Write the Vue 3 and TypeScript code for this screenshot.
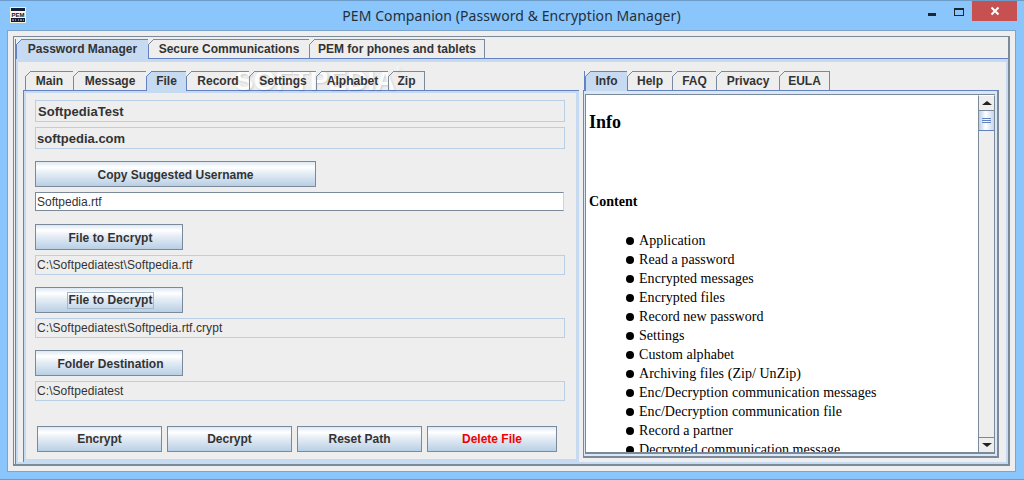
<script setup lang="ts">
interface Tab { label: string; w: number; on?: boolean }
const mainTabs: Tab[] = [
  { label: 'Password Manager', w: 133, on: true },
  { label: 'Secure Communications', w: 161 },
  { label: 'PEM for phones and tablets', w: 175 },
]
const leftTabs: Tab[] = [
  { label: 'Main', w: 49 },
  { label: 'Message', w: 73 },
  { label: 'File', w: 40, on: true },
  { label: 'Record', w: 63 },
  { label: 'Settings', w: 67 },
  { label: 'Alphabet', w: 72 },
  { label: 'Zip', w: 36 },
]
const rightTabs: Tab[] = [
  { label: 'Info', w: 43, on: true },
  { label: 'Help', w: 45 },
  { label: 'FAQ', w: 44 },
  { label: 'Privacy', w: 63 },
  { label: 'EULA', w: 50 },
]
const contents: string[] = [
  'Application',
  'Read a password',
  'Encrypted messages',
  'Encrypted files',
  'Record new password',
  'Settings',
  'Custom alphabet',
  'Archiving files (Zip/ UnZip)',
  'Enc/Decryption communication messages',
  'Enc/Decryption communication file',
  'Record a partner',
  'Decrypted communication message',
]
const actions = [
  { label: 'Encrypt', w: 125 },
  { label: 'Decrypt', w: 125 },
  { label: 'Reset Path', w: 125 },
  { label: 'Delete File', w: 130, danger: true },
]
</script>

<template>
  <div class="window">
    <header class="titlebar">
      <svg class="appicon" width="16" height="16" viewBox="0 0 16 16">
        <rect x="0" y="0" width="16" height="16" fill="#f4f0d8" />
        <rect x="1" y="1" width="14" height="3" fill="#141c38" />
        <rect x="1" y="4" width="14" height="7" fill="#f8f8f0" />
        <text x="8" y="10" text-anchor="middle" class="icontext">PEM</text>
        <rect x="1" y="11" width="14" height="4" fill="#141c38" />
        <path d="M2 13h2M5 13h1M8 13h1M10 13h2M13 13h1" stroke="#d8d8d8" stroke-width="1" />
      </svg>
      <div class="title">PEM Companion (Password &amp; Encryption Manager)</div>
      <div class="controls">
        <span class="minimize"></span>
        <span class="maximize"></span>
        <span class="close">
          <svg width="10" height="10" viewBox="0 0 10 10">
            <path d="M1.5 1.5l7 7M8.5 1.5l-7 7" stroke="#fff" stroke-width="2" />
          </svg>
        </span>
      </div>
    </header>

    <div class="client">
      <div class="tabbed">
        <div class="strip strip-main">
          <div
            v-for="t in mainTabs"
            :key="t.label"
            class="tab"
            :class="{ on: t.on }"
            :style="{ width: t.w + 'px' }"
          >{{ t.label }}</div>
        </div>
        <div class="mainbody">
          <div class="mainband">
            <section class="leftcol">
              <div class="strip strip-sub">
                <div class="watermark">SOFTPEDIA<sup>®</sup></div>
                <div
                  v-for="t in leftTabs"
                  :key="t.label"
                  class="tab"
                  :class="{ on: t.on }"
                  :style="{ width: t.w + 'px' }"
                >{{ t.label }}</div>
              </div>
              <div class="leftpanel">
                <div class="leftband">
                  <div class="field strong first">SoftpediaTest</div>
                  <div class="field strong second">softpedia.com</div>
                  <button class="btn wide">Copy Suggested Username</button>
                  <div class="input">Softpedia.rtf</div>
                  <button class="btn short gap-a">File to Encrypt</button>
                  <div class="field path">C:\Softpediatest\Softpedia.rtf</div>
                  <button class="btn short gap-b"><span class="focus">File to Decrypt</span></button>
                  <div class="field path">C:\Softpediatest\Softpedia.rtf.crypt</div>
                  <button class="btn short gap-b">Folder Destination</button>
                  <div class="field path">C:\Softpediatest</div>
                  <div class="actions">
                    <button
                      v-for="a in actions"
                      :key="a.label"
                      class="btn action"
                      :class="{ danger: a.danger }"
                      :style="{ width: a.w + 'px' }"
                    >{{ a.label }}</button>
                  </div>
                </div>
              </div>
            </section>

            <section class="rightcol">
              <div class="strip strip-sub strip-right">
                <div
                  v-for="t in rightTabs"
                  :key="t.label"
                  class="tab"
                  :class="{ on: t.on }"
                  :style="{ width: t.w + 'px' }"
                >{{ t.label }}</div>
              </div>
              <div class="rightpanel">
                <div class="rightband">
                  <div class="scrollframe">
                    <article class="doc">
                      <h1>Info</h1>
                      <h2>Content</h2>
                      <ul>
                        <li v-for="c in contents" :key="c"><i class="dot"></i>{{ c }}</li>
                      </ul>
                    </article>
                    <div class="scrollbar">
                      <div class="sbtn up"><span class="arrow-up"></span></div>
                      <div class="thumb"><span></span><span></span><span></span></div>
                      <div class="track"></div>
                      <div class="sbtn down"><span class="arrow-down"></span></div>
                    </div>
                  </div>
                </div>
              </div>
            </section>
          </div>
        </div>
      </div>
    </div>
  </div>
</template>

<style>
html, body { margin: 0; padding: 0; overflow: hidden; }
</style>

<style scoped>
* { box-sizing: border-box; }
.window {
  position: relative;
  width: 1024px;
  height: 480px;
  display: flex;
  flex-direction: column;
  background: #8ac6fb;
  border-top: 1px solid #6d9cc9;
  border-bottom: 1px solid #6d9cc9;
  font-family: "Liberation Sans", Arial, sans-serif;
  overflow: hidden;
}
.titlebar {
  height: 29px;
  flex: none;
  display: flex;
  align-items: flex-start;
  position: relative;
}
.appicon { position: absolute; left: 10px; top: 6px; }
.icontext { font: bold 6px "Liberation Sans", sans-serif; fill: #111; letter-spacing: 0; }
.title {
  width: 100%;
  text-align: center;
  font: 14px/30px "Noto Sans", sans-serif;
  letter-spacing: 0.07px;
  color: #23303c;
  padding-right: 1px;
}
.controls {
  position: absolute;
  right: 7px;
  top: 0;
  display: flex;
  align-items: flex-start;
}
.minimize { width: 8px; height: 3px; background: #1c2630; margin: 12px 18px 0 0; }
.maximize { width: 10px; height: 8px; border: 1px solid #1c2630; border-top-width: 2px; margin: 7px 8px 0 0; }
.close {
  width: 45px;
  height: 20px;
  background: #c75050;
  display: flex;
  align-items: center;
  justify-content: center;
}
.client {
  flex: 1;
  margin: 0 8px 7px 7px;
  border: 1px solid #7fa3c9;
  background: #eeeeee;
  padding: 5px;
  display: flex;
  min-height: 0;
}
.tabbed {
  flex: 1;
  border-style: solid;
  border-color: #7a8a9a;
  border-width: 1px 2px 2px 1px;
  padding: 2px 0 0 1px;
  display: flex;
  flex-direction: column;
  min-width: 0;
}
.strip {
  display: flex;
  height: 19px;
  flex: none;
  align-items: flex-start;
  position: relative;
  z-index: 2;
}
.strip-main { margin-left: 1px; }
.strip-sub { margin-left: 2px; }
.tab {
  position: relative;
  z-index: 1;
  height: 19px;
  border-top: 1px solid #7a8a9a;
  border-right: 1px solid #7a8a9a;
  font-size: 12px;
  font-weight: 700;
  line-height: 18px;
  text-align: center;
  color: #333;
  white-space: nowrap;
}
.watermark + .tab,
.tab:first-child { border-left: 1px solid #7a8a9a; }
.tab::before {
  content: "";
  position: absolute;
  left: -1px;
  top: -1px;
  width: 6px;
  height: 6px;
  background: linear-gradient(135deg, #eeeeee 0 42%, #7a8a9a 42% 58%, transparent 58%);
}
.tab.on {
  height: 20px;
  background: #c6daf1;
  border-color: #6382bf;
  box-shadow: -1px 0 0 #6382bf;
}
.tab.on::before {
  background: linear-gradient(135deg, #eeeeee 0 42%, #6382bf 42% 58%, transparent 58%);
}
.watermark {
  position: absolute;
  left: 210px;
  top: -4px;
  font: 700 28px/28px "Liberation Sans", sans-serif;
  color: rgba(255, 255, 255, 0.95);
  text-shadow: 1px 1px 2px rgba(0, 0, 0, 0.14);
  white-space: nowrap;
  pointer-events: none;
}
.watermark sup { font-size: 8px; vertical-align: 18px; line-height: 0; }
.mainbody {
  flex: 1;
  min-height: 0;
  border-top: 1px solid #6382bf;
  border-left: 1px solid #6382bf;
  display: flex;
}
.mainband {
  flex: 1;
  min-width: 0;
  border-style: solid;
  border-color: #c6daf1;
  border-width: 3px 2px 2px 2px;
  padding: 9px 7px 0 5px;
  display: flex;
  gap: 4px;
}
.leftcol { width: 556px; display: flex; flex-direction: column; flex: none; }
.rightcol { flex: 1; display: flex; flex-direction: column; min-width: 0; padding-bottom: 4px; }
.leftpanel {
  flex: 1;
  min-height: 0;
  border-top: 1px solid #6382bf;
  border-left: 1px solid #6382bf;
  display: flex;
}
.leftband {
  flex: 1;
  min-width: 0;
  border-style: solid;
  border-color: #c6daf1;
  border-width: 2px 3px 3px 2px;
  padding: 7px 0 0 9px;
  display: flex;
  flex-direction: column;
  align-items: flex-start;
}
.field {
  width: 530px;
  flex: none;
  border: 1px solid #b8cfe5;
  color: #333;
  white-space: nowrap;
}
.strong { height: 22px; font-size: 13px; font-weight: 700; line-height: 21px; padding-left: 1px; }
.first { padding-left: 2px; letter-spacing: 0.05px; }
.second { margin-top: 5px; margin-bottom: 12px; }
.path { height: 20px; margin-top: 5px; font-size: 12px; line-height: 19px; padding-left: 1px; letter-spacing: 0.07px; }
.input {
  width: 529px;
  height: 19px;
  flex: none;
  margin-top: 5px;
  background: #fff;
  border-top: 1px solid #7a8a9a;
  border-left: 1px solid #7a8a9a;
  border-bottom: 1px solid #7a8a9a;
  border-right: 1px solid #c6d5e4;
  font-size: 12px;
  line-height: 18px;
  padding-left: 1px;
  color: #333;
}
.btn {
  height: 26px;
  flex: none;
  padding: 1px 0 0;
  border: 1px solid #7a8a9a;
  border-radius: 0;
  background: linear-gradient(180deg, #dde8f3 0%, #ffffff 22%, #e6eef6 45%, #b9cfe5 100%);
  font-family: "Liberation Sans", Arial, sans-serif;
  font-size: 12px;
  font-weight: 700;
  color: #333;
  white-space: nowrap;
}
.wide { width: 281px; }
.short { width: 148px; padding-left: 3px; letter-spacing: 0.05px; }
.gap-a { margin-top: 13px; }
.gap-b { margin-top: 12px; }
.focus { display: inline-block; border: 1px solid #a3b8cc; line-height: 15px; }
.actions { display: flex; gap: 5px; margin: 25px 0 0 2px; }
.action { padding: 0; }
.danger { color: #f00000; }
.rightpanel {
  flex: 1;
  min-height: 0;
  border-top: 1px solid #6382bf;
  border-left: 1px solid #6f88b5;
  border-right: 2px solid #7a8a9a;
  border-bottom: 2px solid #7a8a9a;
  display: flex;
}
.rightband {
  flex: 1;
  min-width: 0;
  border-style: solid;
  border-color: #dbe7f5;
  border-width: 3px 2px 2px 1px;
  display: flex;
}
.scrollframe {
  flex: 1;
  min-width: 0;
  border-top: 1px solid #7a8a9a;
  border-left: 1px solid #7a8a9a;
  border-bottom: 2px solid #7a8a9a;
  display: flex;
  background: #fff;
}
.doc {
  flex: 1;
  min-width: 0;
  overflow: hidden;
  padding-left: 3px;
  font-family: "Liberation Serif", "Times New Roman", serif;
  color: #000;
}
.doc h1 { margin: 17px 0 0; font-size: 18px; line-height: 21px; font-weight: 700; }
.doc h2 { margin: 60px 0 0; font-size: 14px; line-height: 17px; font-weight: 700; letter-spacing: 0.05px; }
.doc ul { list-style: none; margin: 21px 0 0; padding: 0 0 0 37px; }
.doc li { height: 19px; font-size: 14px; line-height: 19px; display: flex; align-items: center; white-space: nowrap; letter-spacing: 0.05px; }
.dot { width: 8px; height: 8px; border-radius: 50%; background: #000; margin-right: 5px; flex: none; }
.scrollbar {
  width: 17px;
  flex: none;
  display: flex;
  flex-direction: column;
  background: #eeeeee;
  border-left: 1px solid #7a8a9a;
  border-right: 1px solid #7a8a9a;
  border-top: 1px solid #fff;
}
.sbtn { height: 15px; flex: none; display: flex; align-items: center; justify-content: center; }
.sbtn.up { border-bottom: 1px solid #7a8a9a; }
.sbtn.down { border-top: 1px solid #7a8a9a; }
.arrow-up { width: 0; height: 0; border: 4px solid transparent; border-top: 0; border-bottom: 4px solid #222; border-left-width: 5px; border-right-width: 5px; }
.arrow-down { width: 0; height: 0; border: 4px solid transparent; border-bottom: 0; border-top: 4px solid #222; border-left-width: 5px; border-right-width: 5px; }
.thumb {
  height: 20px;
  flex: none;
  border-bottom: 1px solid #6382bf;
  background: linear-gradient(90deg, #b9d0e8 0%, #ffffff 45%, #c2d6ec 100%);
  display: flex;
  flex-direction: column;
  justify-content: center;
  align-items: center;
  gap: 1px;
}
.thumb span { width: 9px; height: 1px; background: #6382bf; }
.track { flex: 1; }
</style>
